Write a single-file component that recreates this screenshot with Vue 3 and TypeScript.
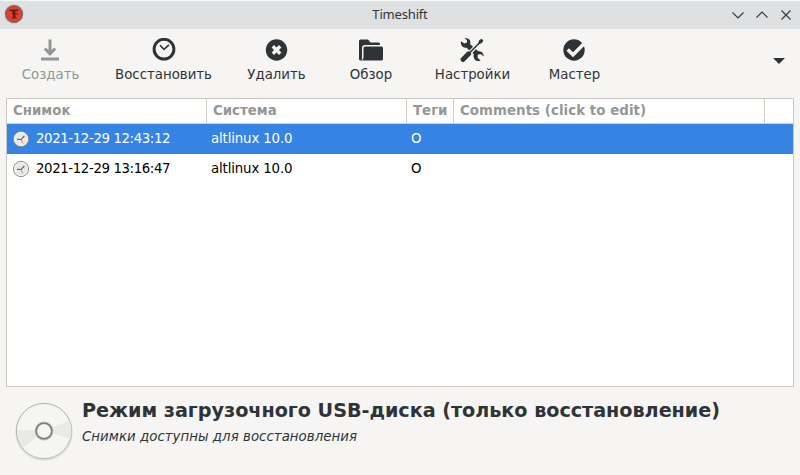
<script setup lang="ts">
import { ref } from 'vue'

interface Action { id: string; label: string; disabled?: boolean }
interface Snapshot { date: string; system: string; tags: string; selected: boolean }

const actions: Action[] = [
  { id: 'create', label: 'Создать', disabled: true },
  { id: 'restore', label: 'Восстановить' },
  { id: 'delete', label: 'Удалить' },
  { id: 'browse', label: 'Обзор' },
  { id: 'settings', label: 'Настройки' },
  { id: 'wizard', label: 'Мастер' },
]

const snapshots = ref<Snapshot[]>([
  { date: '2021-12-29 12:43:12', system: 'altlinux 10.0', tags: 'O', selected: true },
  { date: '2021-12-29 13:16:47', system: 'altlinux 10.0', tags: 'O', selected: false },
])

function select(row: Snapshot) {
  snapshots.value.forEach((s) => (s.selected = s === row))
}
</script>

<template>
  <div class="window">
    <header class="titlebar">
      <svg class="app-icon" viewBox="0 0 20 20">
        <circle cx="10" cy="10" r="9.3" fill="#857a78" />
        <circle cx="10" cy="10" r="8.3" fill="#a5473d" />
        <circle cx="10" cy="10" r="7.6" fill="#e2402f" />
        <path d="M5 7.2Q5.2 5.2 7.5 5.4L14.6 5.6 14 7.3 11.4 7 11.3 9.2 14 9.4 14.2 10.6 11.3 10.4 11.5 13.3Q13.2 13.4 13.3 14.6H7.4Q7.5 13.5 9 13.3L9 10.3 7.8 10 8.8 7.2 6.4 7Z" fill="#6b1b16" />
      </svg>
      <span class="title">Timeshift</span>
      <div class="controls">
        <svg viewBox="0 0 14 14"><path d="M1.5 4.5 7 10 12.5 4.5" /></svg>
        <svg viewBox="0 0 14 14"><path d="M1.5 9.5 7 4 12.5 9.5" /></svg>
        <svg viewBox="0 0 14 14"><path d="M2.5 2.5 11.5 11.5M11.5 2.5 2.5 11.5" /></svg>
      </div>
    </header>

    <nav class="toolbar">
      <button v-for="a in actions" :key="a.id" class="tool" :class="[a.id, { disabled: a.disabled }]">
        <svg class="tool-icon" viewBox="0 0 24 24">
          <template v-if="a.id === 'create'">
            <path d="M12 1.5V15M6.8 10.5 12 15.8 17.2 10.5" fill="none" stroke="currentColor" stroke-width="3" />
            <rect x="3" y="19.5" width="18" height="3" fill="currentColor" />
          </template>
          <template v-else-if="a.id === 'restore'">
            <circle cx="12" cy="11.2" r="9.9" fill="none" stroke="currentColor" stroke-width="3" />
            <path d="M8 7.3 12 11.3 17 6.8" fill="none" stroke="currentColor" stroke-width="1.6" />
          </template>
          <template v-else-if="a.id === 'delete'">
            <circle cx="11.5" cy="12" r="10.7" fill="currentColor" />
            <path d="M7.8 8.3 15.2 15.7M15.2 8.3 7.8 15.7" stroke="#f6f5f4" stroke-width="3.4" />
          </template>
          <template v-else-if="a.id === 'browse'">
            <path d="M0 3Q0 1.5 1.5 1.5H9L11.5 4.5H19.5Q21 4.5 21 6V7H6Q3 7 3 10V20.5Q3 22.5 1.5 22.5Q0 22.5 0 21Z" fill="currentColor" />
            <path d="M4.5 10Q4.5 8.5 6 8.5H22.5Q24 8.5 24 10V21Q24 22.5 22.5 22.5H1.5Q4.5 22 4.5 19Z" fill="currentColor" />
          </template>
          <template v-else-if="a.id === 'settings'">
            <path d="M1 3.2 4.3 5.5 7 4.5 6.9 2 4.2.4Q9.5-.5 10.3 3.5L10.2 6.2 18.2 13.3Q22.8 12.8 24 18.5L20.5 16 17.7 16.8 17.7 19.8 20.7 22.8Q14 24.2 13.5 18L13.8 16.3 6.5 9.7Q1.2 9.8.8 5Z" fill="currentColor" />
            <path d="M10.2 14.5 20.5 3.5" stroke="#f6f5f4" stroke-width="4" />
            <path d="M10.2 14.2 20.5 3.8" stroke="currentColor" stroke-width="1.6" />
            <path d="M18.2 5.2 19.2 2.3 21.5.8 23.4 2.6 21.9 4.9 19.3 6.1Z" fill="currentColor" />
            <path d="M3 21.5 8.7 15.8" stroke="currentColor" stroke-width="4.8" stroke-linecap="round" />
          </template>
          <template v-else>
            <circle cx="12" cy="12" r="10.7" fill="currentColor" />
            <path d="M5.7 11.5 11 16.8 23 4.8" fill="none" stroke="#f6f5f4" stroke-width="3.6" />
          </template>
        </svg>
        <span class="tool-label">{{ a.label }}</span>
      </button>
      <button class="menu" aria-label="Меню"><svg viewBox="0 0 12 6"><path d="M0 0H12L6 6Z" fill="currentColor" /></svg></button>
    </nav>

    <main class="list">
      <div class="row head">
        <span class="cell">Снимок</span>
        <span class="cell">Система</span>
        <span class="cell">Теги</span>
        <span class="cell comments">Comments (click to edit)</span>
        <span class="cell"></span>
      </div>
      <div v-for="s in snapshots" :key="s.date" class="row item" :class="{ selected: s.selected }" @click="select(s)">
        <span class="cell date">
          <svg class="clock" viewBox="0 0 18 18">
            <circle cx="9" cy="9" r="7.6" fill="#e8e8e6" stroke="#8c8e8b" stroke-width="1" />
            <circle cx="9" cy="9" r="6.5" fill="none" stroke="#f7f7f5" stroke-width=".8" />
            <path d="M5 9.2 9 9.5 12.4 5.8" fill="none" stroke="#4f5354" stroke-width="1.1" />
            <path d="M9 9.4 10.8 13.5" stroke="#e27870" stroke-width=".9" />
          </svg>
          <span>{{ s.date }}</span>
        </span>
        <span class="cell sys">{{ s.system }}</span>
        <span class="cell">{{ s.tags }}</span>
        <span class="cell"></span>
        <span class="cell"></span>
      </div>
    </main>

    <footer class="status">
      <svg class="disc" viewBox="0 0 60 60">
        <circle cx="30" cy="31" r="28" fill="none" stroke="#dededc" stroke-width="1.4" />
        <circle cx="30" cy="30" r="27.6" fill="#f5f5f4" stroke="#b3b3b1" stroke-width="1" />
        <path d="M30 30 2.9 29A27 27 0 0 0 9.5 46.5ZM30 30 55.2 19.5A27 27 0 0 1 56.5 37.2Z" fill="#e9e9e8" />
        <circle cx="30" cy="30" r="8.1" fill="#f6f5f4" stroke="#b9b9b8" stroke-width="2.6" />
        <circle cx="30" cy="30" r="7.8" fill="none" stroke="#777978" stroke-width="1.2" />
      </svg>
      <div class="status-text">
        <h1>Режим загрузочного USB-диска (только восстановление)</h1>
        <p>Снимки доступны для восстановления</p>
      </div>
    </footer>
  </div>
</template>

<style>
body { background: #f6f5f4; }
</style>

<style scoped>
.window { box-sizing: border-box; display: flex; flex-direction: column; width: 800px; height: 475px; overflow: hidden; background: #f6f5f4; color: #2e3436; font: 13.333px/16px "DejaVu Sans", sans-serif; }
.titlebar { display: grid; grid-template-columns: 80px 1fr 80px; align-items: center; height: 29px; padding-top: 1px; box-sizing: border-box; background: linear-gradient(#f6f7f7 1px, #dee0e2 1px); }
.app-icon { width: 20px; height: 20px; margin-left: 4px; margin-top: -2px; }
.title { justify-self: center; margin-top: -2px; font: 13px/18px "Noto Sans", sans-serif; letter-spacing: -0.17px; color: #31363b; }
.controls { display: flex; justify-content: flex-end; gap: 10px; padding-right: 7px; margin-top: -1px; }
.controls svg { width: 14px; height: 14px; fill: none; stroke: #31363b; stroke-width: 1.1; }
.toolbar { display: flex; height: 69px; padding-left: 6px; box-sizing: border-box; }
button { border: 0; padding: 0; background: none; color: inherit; font: inherit; }
.tool { display: flex; flex-direction: column; align-items: center; padding-top: 9px; gap: 5px; }
.tool-label { white-space: nowrap; }
.tool-icon { width: 24px; height: 24px; display: block; }
.disabled { color: #929595; }
.create { width: 88px; }
.create .tool-label, .settings .tool-label, .wizard .tool-label { padding-left: 1px; }
.restore { width: 139px; }
.delete { width: 87px; }
.browse { width: 102px; }
.settings { width: 100px; }
.wizard { width: 104px; }
.menu { margin-left: auto; padding: 0 15px 5px 0; display: flex; align-items: center; }
.menu svg { width: 12px; height: 6px; }
.list { height: 289px; margin: 0 6px; border: 1px solid #cdc7c2; box-sizing: border-box; background: #fff; color: #000; }
.row { display: grid; grid-template-columns: 200px 200px 47px 311px 28px; }
.cell { display: flex; align-items: center; box-sizing: border-box; white-space: nowrap; padding-left: 4px; }
.head { height: 25px; box-sizing: border-box; border-bottom: 1px solid #d5d0cc; color: #949796; font-weight: bold; }
.head .cell { padding-left: 6px; padding-bottom: 1px; border-right: 1px solid #d5d0cc; }
.head .cell:last-child { border-right: 0; }
.comments { letter-spacing: 0.07px; }
.item { height: 30px; }
.selected { background: #3584e4; color: #fff; }
.date { padding-left: 5px; gap: 6px; letter-spacing: -0.39px; }
.sys { letter-spacing: -0.14px; }
.clock { width: 18px; height: 18px; }
.status { display: flex; padding: 14px 0 0 14px; gap: 8px; }
.disc { width: 60px; height: 60px; }
h1, p { margin: 0; white-space: nowrap; }
h1 { font-size: 19.2px; line-height: 24px; margin-top: -2px; letter-spacing: -0.03px; }
.status p { font-style: italic; margin-top: 6px; letter-spacing: 0.04px; }
</style>
